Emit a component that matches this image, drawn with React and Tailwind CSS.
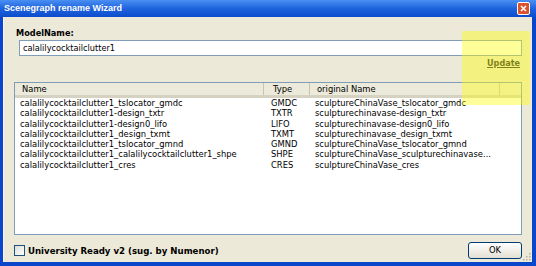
import React from 'react'

const rows = [
  ['calalilycocktailclutter1_tslocator_gmdc', 'GMDC', 'sculptureChinaVase_tslocator_gmdc'],
  ['calalilycocktailclutter1-design_txtr', 'TXTR', 'sculpturechinavase-design_txtr'],
  ['calalilycocktailclutter1-design0_lifo', 'LIFO', 'sculpturechinavase-design0_lifo'],
  ['calalilycocktailclutter1_design_txmt', 'TXMT', 'sculpturechinavase_design_txmt'],
  ['calalilycocktailclutter1_tslocator_gmnd', 'GMND', 'sculptureChinaVase_tslocator_gmnd'],
  ['calalilycocktailclutter1_calalilycocktailclutter1_shpe', 'SHPE', 'sculptureChinaVase_sculpturechinavase...'],
  ['calalilycocktailclutter1_cres', 'CRES', 'sculptureChinaVase_cres'],
]

const ui = { fontFamily: '"DejaVu Sans", Verdana, sans-serif' }

export default function App() {
  return (
    <div className="relative w-[536px] h-[266px] bg-[#0a46cc] flex flex-col overflow-hidden" style={ui}>
      {/* title bar */}
      <div className="h-[17px] shrink-0 flex items-center justify-between pl-[4px] pr-[6px] bg-linear-to-b from-[#4a8ff2] via-[#1f63de] to-[#0c4ccc]">
        <span className="text-white font-bold text-[9px] leading-none" style={{ fontFamily: '"Liberation Sans", Arial, sans-serif' }}>
          Scenegraph rename Wizard
        </span>
        <div className="w-[13px] h-[13px] rounded-[2px] border border-white bg-[#d9532c] flex items-center justify-center">
          <svg width="7" height="7" viewBox="0 0 7 7">
            <path d="M1 1L6 6M6 1L1 6" stroke="white" strokeWidth="1.6" />
          </svg>
        </div>
      </div>

      {/* client area */}
      <div className="relative flex-1 mx-[3px] mr-[4px] mb-[4px] bg-[#ece9d8] border-l border-[#f6f4ec] px-[10px] flex flex-col">
        <div className="mt-[11px] ml-[2px] h-[10px] leading-[10px] text-[8.2px] font-bold text-black">ModelName:</div>
        <div className="mt-[2px] ml-[5px] h-[16px] border border-[#7f9db9] bg-white flex items-center pl-[3px] text-[8.2px] text-black">
          calalilycocktailclutter1
        </div>
        <div className="mt-[2px] h-[10px] leading-[10px] self-end mr-[2px] text-[8.1px] font-bold underline text-[#2e2e2e]">Update</div>

        {/* list view */}
        <div className="mt-[14px] h-[153px] border border-[#7f9db9] bg-white flex flex-col text-[8.4px] text-black">
          <div className="h-[15px] shrink-0 bg-[#ebeadb] border-b-[3px] border-[#d6d2c2] flex items-center">
            <div className="w-[249px] h-full flex items-center pl-[7px] border-r border-[#c7c5b2]">Name</div>
            <div className="w-[46px] h-full flex items-center pl-[9px] border-r border-[#c7c5b2]">Type</div>
            <div className="w-[190px] h-full flex items-center pl-[7px] border-r border-[#c7c5b2]">original Name</div>
            <div className="flex-1" />
          </div>
          {rows.map(([a, b, c]) => (
            <div key={a} className="h-[10.3px] flex items-center leading-none whitespace-nowrap">
              <div className="w-[249px] pl-[5px]">{a}</div>
              <div className="w-[46px] pl-[7px]">{b}</div>
              <div className="pl-[5px]">{c}</div>
            </div>
          ))}
        </div>

        {/* bottom row */}
        <div className="mt-[7px] flex items-center justify-between">
          <div className="flex items-center gap-[3px] mt-[1px]">
            <div className="w-[11px] h-[11px] border border-[#1c5180] bg-linear-to-br from-[#dcdcd7] to-white" />
            <span className="text-[8.6px] font-bold text-black">University Ready v2 (sug. by Numenor)</span>
          </div>
          <div className="w-[54px] h-[17px] rounded-[3px] border border-[#003c74] bg-linear-to-b from-white to-[#e3e0d3] flex items-center justify-center text-[8.4px] text-black">
            OK
          </div>
        </div>

        {/* size grip */}
        <svg className="absolute right-[1px] bottom-[1px]" width="8" height="8" viewBox="0 0 8 8">
          <rect x="6" y="0" width="1.5" height="1.5" fill="#b5b2a2" />
          <rect x="3" y="3" width="1.5" height="1.5" fill="#b5b2a2" />
          <rect x="6" y="3" width="1.5" height="1.5" fill="#b5b2a2" />
          <rect x="0" y="6" width="1.5" height="1.5" fill="#b5b2a2" />
          <rect x="3" y="6" width="1.5" height="1.5" fill="#b5b2a2" />
          <rect x="6" y="6" width="1.5" height="1.5" fill="#b5b2a2" />
        </svg>
      </div>

      {/* yellow highlight annotation */}
      <div className="absolute left-[462px] top-[31px] w-[68px] h-[74px] bg-[#ffff00]/40 pointer-events-none" />
    </div>
  )
}
